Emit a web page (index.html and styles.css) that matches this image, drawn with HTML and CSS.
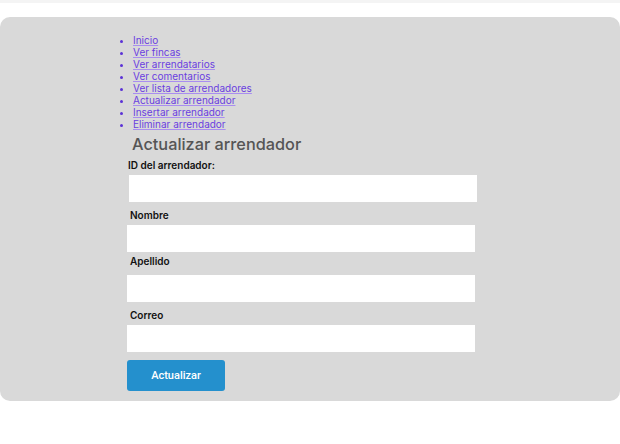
FILE: index.html
```html
<!DOCTYPE html>
<html lang="es">
<head>
<meta charset="utf-8">
<title>Actualizar arrendador</title>
<link rel="stylesheet" href="styles.css">
</head>
<body>
<div class="topbar"></div>
<main class="panel">
  <ul class="nav">
    <li><a href="#">Inicio</a></li>
    <li><a href="#">Ver fincas</a></li>
    <li><a href="#">Ver arrendatarios</a></li>
    <li><a href="#">Ver comentarios</a></li>
    <li><a href="#">Ver lista de arrendadores</a></li>
    <li><a href="#">Actualizar arrendador</a></li>
    <li><a href="#">Insertar arrendador</a></li>
    <li><a href="#">Eliminar arrendador</a></li>
  </ul>
  <h2 class="title">Actualizar arrendador</h2>
  <form class="form">
    <label class="label label-id">ID del arrendador:</label>
    <input class="field field-id" type="text">
    <label class="label label-nombre">Nombre</label>
    <input class="field" type="text">
    <label class="label label-apellido">Apellido</label>
    <input class="field" type="text">
    <label class="label label-correo">Correo</label>
    <input class="field" type="text">
    <button class="btn" type="button">Actualizar</button>
  </form>
</main>
</body>
</html>
```

FILE: styles.css
```css
* { box-sizing: border-box; }
html, body { margin: 0; padding: 0; background: #fff; }
body { font-family: Inter, "Liberation Sans", sans-serif; }

.topbar { height: 3px; background: #f4f4f4; }

.panel {
  margin-top: 14px;
  width: 620px;
  background: #d9d9d9;
  border-radius: 10px;
  padding: 17px 0 10px 127px;
}

.nav {
  margin: 0;
  padding: 0 0 0 6px;
  font-size: 10px;
  line-height: 12px;
  color: #5b32d6;
}
.nav a { color: #6a3ee0; text-decoration: underline; text-decoration-color: #a98df0; }

.title {
  margin: 4px 0 0 5px;
  font-size: 16.3px;
  line-height: 20px;
  font-weight: 500;
  color: #555;
}

.form { display: flex; flex-direction: column; align-items: flex-start; }

.label {
  font-size: 10px;
  line-height: 12px;
  font-weight: 600;
  color: #111;
  margin-left: 3px;
}
.label-id { margin-top: 5px; margin-left: 1px; }
.label-nombre { margin-top: 7px; }
.label-apellido { margin-top: 3px; }
.label-correo { margin-top: 7px; }

.field {
  margin-top: 4px;
  width: 348px;
  height: 27px;
  border: none;
  background: #fff;
  outline: none;
}
.label-apellido + .field { margin-top: 8px; }
.field-id { margin-left: 2px; }

.btn {
  margin-top: 8px;
  width: 98px;
  height: 31px;
  border: none;
  border-radius: 3px;
  background: #2490cd;
  color: #fff;
  font-family: Roboto, "Liberation Sans", sans-serif;
  font-size: 11px;
  font-weight: 500;
}
```
